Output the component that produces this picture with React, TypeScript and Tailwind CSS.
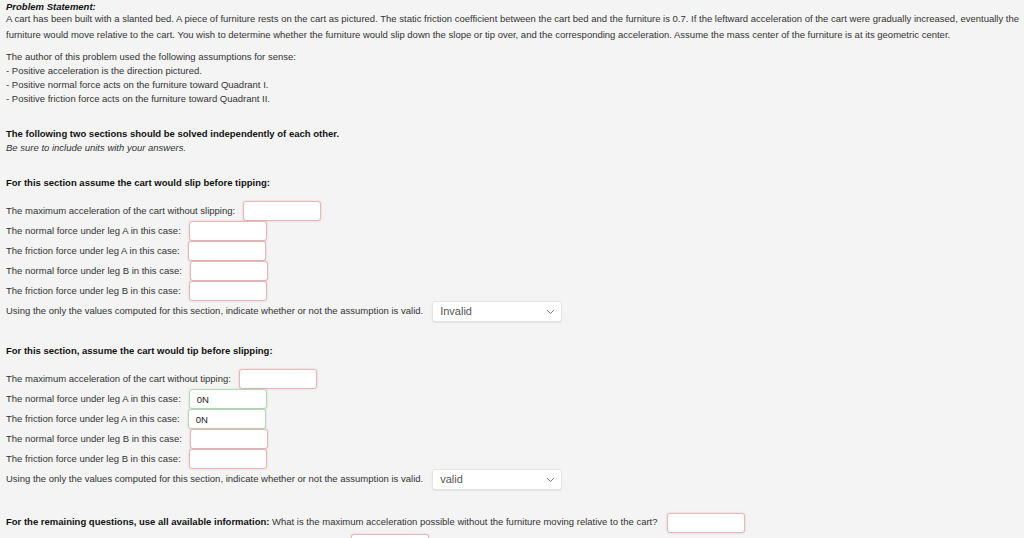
const font = { fontFamily: '"Liberation Sans", Arial, sans-serif' };

type Field = { label: string; value?: string; ok?: boolean };

const AnswerBox = ({ value, ok }: { value?: string; ok?: boolean }) => (
  <input
    readOnly
    value={value ?? ''}
    className={
      'h-[20px] w-[78px] rounded-[3px] bg-white px-[7px] text-[9.5px] text-[#222] outline-none ' +
      (ok
        ? 'border border-[#b9d8b9] shadow-[0_0_2px_rgba(80,160,80,0.35)]'
        : 'border border-[#e6b9b9] shadow-[0_0_2px_rgba(200,80,80,0.35)]')
    }
  />
);

const Choice = ({ value }: { value: string }) => (
  <div className="flex h-[21px] w-[130px] items-center justify-between rounded-[3px] border border-[#e4e4e4] bg-white pl-[7px] pr-[6px] shadow-[0_1px_1px_rgba(0,0,0,0.08)]">
    <span className="text-[11px] text-[#555]">{value}</span>
    <svg width="9" height="6" viewBox="0 0 9 6" fill="none">
      <path d="M1 1l3.5 3.5L8 1" stroke="#888" strokeWidth="1" />
    </svg>
  </div>
);

const Section = ({
  title,
  fields,
  verdict,
  wide,
}: {
  title: string;
  fields: Field[];
  verdict: string;
  wide?: boolean;
}) => (
  <div>
    <h3 className="text-[9.5px] font-bold leading-[14px] text-[#111]">{title}</h3>
    <div className={(wide ? 'mt-[11px]' : 'mt-[10px]') + ' flex flex-col'}>
      {fields.map((f, i) => (
        <div key={i} className="flex h-[20px] items-center gap-[8px]">
          <span className="text-[9.5px] text-[#333]">{f.label}</span>
          <AnswerBox value={f.value} ok={f.ok} />
        </div>
      ))}
      <div className="flex h-[21px] items-center gap-[9px]">
        <span className="text-[9.5px] text-[#333]">
          Using the only the values computed for this section, indicate whether or not the assumption is valid.
        </span>
        <Choice value={verdict} />
      </div>
    </div>
  </div>
);

export default function App() {
  const slip: Field[] = [
    { label: 'The maximum acceleration of the cart without slipping:' },
    { label: 'The normal force under leg A in this case:' },
    { label: 'The friction force under leg A in this case:' },
    { label: 'The normal force under leg B in this case:' },
    { label: 'The friction force under leg B in this case:' },
  ];
  const tip: Field[] = [
    { label: 'The maximum acceleration of the cart without tipping:' },
    { label: 'The normal force under leg A in this case:', value: '0N', ok: true },
    { label: 'The friction force under leg A in this case:', value: '0N', ok: true },
    { label: 'The normal force under leg B in this case:' },
    { label: 'The friction force under leg B in this case:' },
  ];

  return (
    <div className="h-[538px] overflow-hidden bg-[#f4f4f4] px-[6px] text-[#222]" style={font}>
      <h2 className="pt-[1px] text-[9.5px] font-bold italic leading-[11px] text-[#111]">Problem Statement:</h2>
      <p className="-mt-[1px] whitespace-nowrap text-[9.5px] leading-[16px] text-[#333]">
        A cart has been built with a slanted bed. A piece of furniture rests on the cart as pictured. The static friction
        coefficient between the cart bed and the furniture is 0.7. If the leftward acceleration of the cart were gradually
        increased, eventually the
        <br />
        furniture would move relative to the cart. You wish to determine whether the furniture would slip down the slope
        or tip over, and the corresponding acceleration. Assume the mass center of the furniture is at its geometric center.
      </p>

      <div className="mt-[7px] text-[9.5px] leading-[14px] text-[#333]">
        <p>The author of this problem used the following assumptions for sense:</p>
        <p>- Positive acceleration is the direction pictured.</p>
        <p>- Positive normal force acts on the furniture toward Quadrant I.</p>
        <p>- Positive friction force acts on the furniture toward Quadrant II.</p>
      </div>

      <div className="mt-[21px] text-[9.5px] leading-[14px]">
        <p className="font-bold text-[#111]">The following two sections should be solved independently of each other.</p>
        <p className="italic text-[#333]">Be sure to include units with your answers.</p>
      </div>

      <div className="mt-[21px]">
        <Section title="For this section assume the cart would slip before tipping:" fields={slip} verdict="Invalid" wide />
      </div>

      <div className="mt-[22px]">
        <Section title="For this section, assume the cart would tip before slipping:" fields={tip} verdict="valid" wide />
      </div>

      <div className="mt-[22px] flex h-[21px] items-center gap-[9px] text-[9.5px] text-[#333]">
        <span>
          <b className="text-[#111]">For the remaining questions, use all available information:</b> What is the maximum
          acceleration possible without the furniture moving relative to the cart?
        </span>
        <AnswerBox />
      </div>
      <div className="flex h-[21px] items-center gap-[9px] text-[9.5px] text-[#333]">
        <span>With an acceleration greater than this, which way would the furniture move first?</span>
        <AnswerBox />
      </div>
    </div>
  );
}
